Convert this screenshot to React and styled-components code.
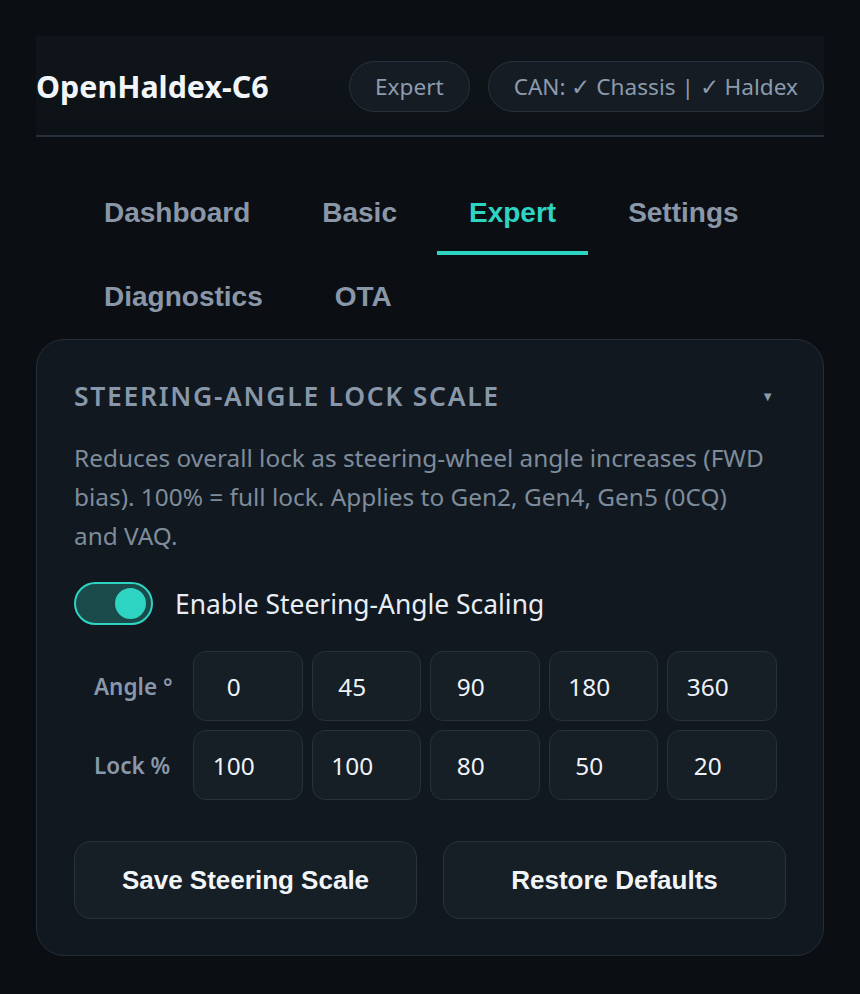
import React, { useState } from "react";
import styled, { createGlobalStyle } from "styled-components";

const ui = `"Segoe UI", "Noto Sans", "Open Sans", sans-serif`;
const arial = `"Liberation Sans", Arial, sans-serif`;

const GlobalStyle = createGlobalStyle`
	html, body {
		margin: 0;
		padding: 0;
		background: #0b0f14;
	}
	body {
		font-family: ${ui};
		color: #e6edf3;
	}
	* {
		box-sizing: border-box;
	}
`;

const Page = styled.div`
	padding: 36px 36px 38px;
	min-height: 994px;
`;

const Header = styled.header`
	display: flex;
	align-items: center;
	justify-content: space-between;
	height: 101px;
	padding-top: 2px;
	background: linear-gradient(180deg, #10151b 0%, #0d1217 100%);
	border-bottom: 2px solid #26303a;
`;

const Title = styled.h1`
	margin: 0;
	font-size: 30.4px;
	font-weight: 700;
	color: #f2f5f8;
`;

const Badges = styled.div`
	display: flex;
	gap: 18px;
`;

const Badge = styled.span`
	display: inline-flex;
	align-items: center;
	height: 51px;
	padding: 0 25px;
	border-radius: 26px;
	background: #151c23;
	border: 1.5px solid #28323c;
	color: #8c9bad;
	font-size: 22.6px;
`;

const Tabs = styled.nav`
	display: flex;
	flex-wrap: wrap;
	gap: 4px 8px;
	padding: 38px 36px 0;
`;

const Tab = styled.button`
	padding: 23px 32px;
	border: 0;
	border-bottom: 4px solid ${({ active }) => (active ? "#2dd4c1" : "transparent")};
	background: none;
	font-family: ${arial};
	font-size: 28px;
	line-height: 30px;
	font-weight: 700;
	color: ${({ active }) => (active ? "#2dd4c1" : "#8a97a8")};
	cursor: pointer;
`;

const Card = styled.section`
	padding: 36px 37px 36px;
	border-radius: 28px;
	background: #111820;
	border: 1.5px solid #242e38;
`;

const CardHead = styled.div`
	display: flex;
	align-items: center;
	justify-content: space-between;
	padding-right: 12px;
`;

const CardTitle = styled.h2`
	margin: 0;
	font-size: 26.5px;
	line-height: 40px;
	font-weight: 600;
	letter-spacing: 1.7px;
	text-transform: uppercase;
	color: #8897a9;
`;

const Caret = styled.span`
	font-size: 13px;
	color: #8a99ab;
`;

const Description = styled.p`
	max-width: 700px;
	margin: 22px 0 0;
	font-size: 24.4px;
	line-height: 39px;
	color: #7e8c9b;
`;

const ToggleRow = styled.label`
	display: flex;
	align-items: center;
	gap: 22px;
	margin-top: 27px;
	font-size: 26.4px;
	color: #e8eef3;
	cursor: pointer;
`;

const Track = styled.span`
	position: relative;
	flex: none;
	display: inline-block;
	width: 79px;
	height: 43px;
	border-radius: 22px;
	border: 2px solid #2dd4c1;
	background: ${({ on }) => (on ? "#1b4a4a" : "#1a2129")};
`;

const Knob = styled.span`
	position: absolute;
	top: 4px;
	left: ${({ on }) => (on ? "39px" : "4px")};
	width: 31px;
	height: 31px;
	border-radius: 50%;
	background: #2dd4c1;
`;

const Grid = styled.div`
	display: grid;
	grid-template-columns: 110px repeat(5, 109.5px);
	column-gap: 9px;
	row-gap: 9px;
	margin-top: 26px;
`;

const RowLabel = styled.span`
	display: flex;
	align-items: center;
	padding-left: 20px;
	font-size: 22.5px;
	font-weight: 600;
	color: #8897a9;
`;

const Cell = styled.input`
	width: 100%;
	height: 70px;
	padding: 0 34px 0 6px;
	border-radius: 13px;
	background: #161e26;
	border: 1.5px solid #27313b;
	color: #eef2f6;
	font-family: ${ui};
	font-size: 24.4px;
	text-align: center;
	outline: none;
`;

const Actions = styled.div`
	display: grid;
	grid-template-columns: 1fr 1fr;
	gap: 26px;
	margin-top: 41px;
`;

const ActionButton = styled.button`
	height: 78px;
	border-radius: 17px;
	background: #161e26;
	border: 1.5px solid #29333d;
	color: #f2f5f8;
	font-family: ${arial};
	font-size: 26px;
	font-weight: 700;
	cursor: pointer;
`;

const tabs = [
	"Dashboard",
	"Basic",
	"Expert",
	"Settings",
	"Diagnostics",
	"OTA",
];

const angles = [0, 45, 90, 180, 360];
const locks = [100, 100, 80, 50, 20];

const App = () => {
	const [active, setActive] = useState("Expert");
	const [enabled, setEnabled] = useState(true);

	return (
		<Page>
			<GlobalStyle />
			<Header>
				<Title>OpenHaldex-C6</Title>
				<Badges>
					<Badge>Expert</Badge>
					<Badge>CAN: ✓ Chassis | ✓ Haldex</Badge>
				</Badges>
			</Header>

			<Tabs>
				{tabs.map(t => (
					<Tab key={t} active={t === active} onClick={() => setActive(t)}>
						{t}
					</Tab>
				))}
			</Tabs>

			<Card>
				<CardHead>
					<CardTitle>Steering-Angle Lock Scale</CardTitle>
					<Caret>▼</Caret>
				</CardHead>
				<Description>
					Reduces overall lock as steering-wheel angle increases (FWD
					bias). 100% = full lock. Applies to Gen2, Gen4, Gen5 (0CQ) and
					VAQ.
				</Description>

				<ToggleRow onClick={() => setEnabled(!enabled)}>
					<Track on={enabled}>
						<Knob on={enabled} />
					</Track>
					Enable Steering-Angle Scaling
				</ToggleRow>

				<Grid>
					<RowLabel>Angle °</RowLabel>
					{angles.map((a, i) => (
						<Cell key={"a" + i} defaultValue={a} />
					))}
					<RowLabel>Lock %</RowLabel>
					{locks.map((l, i) => (
						<Cell key={"l" + i} defaultValue={l} />
					))}
				</Grid>

				<Actions>
					<ActionButton>Save Steering Scale</ActionButton>
					<ActionButton>Restore Defaults</ActionButton>
				</Actions>
			</Card>
		</Page>
	);
};

export default App;
